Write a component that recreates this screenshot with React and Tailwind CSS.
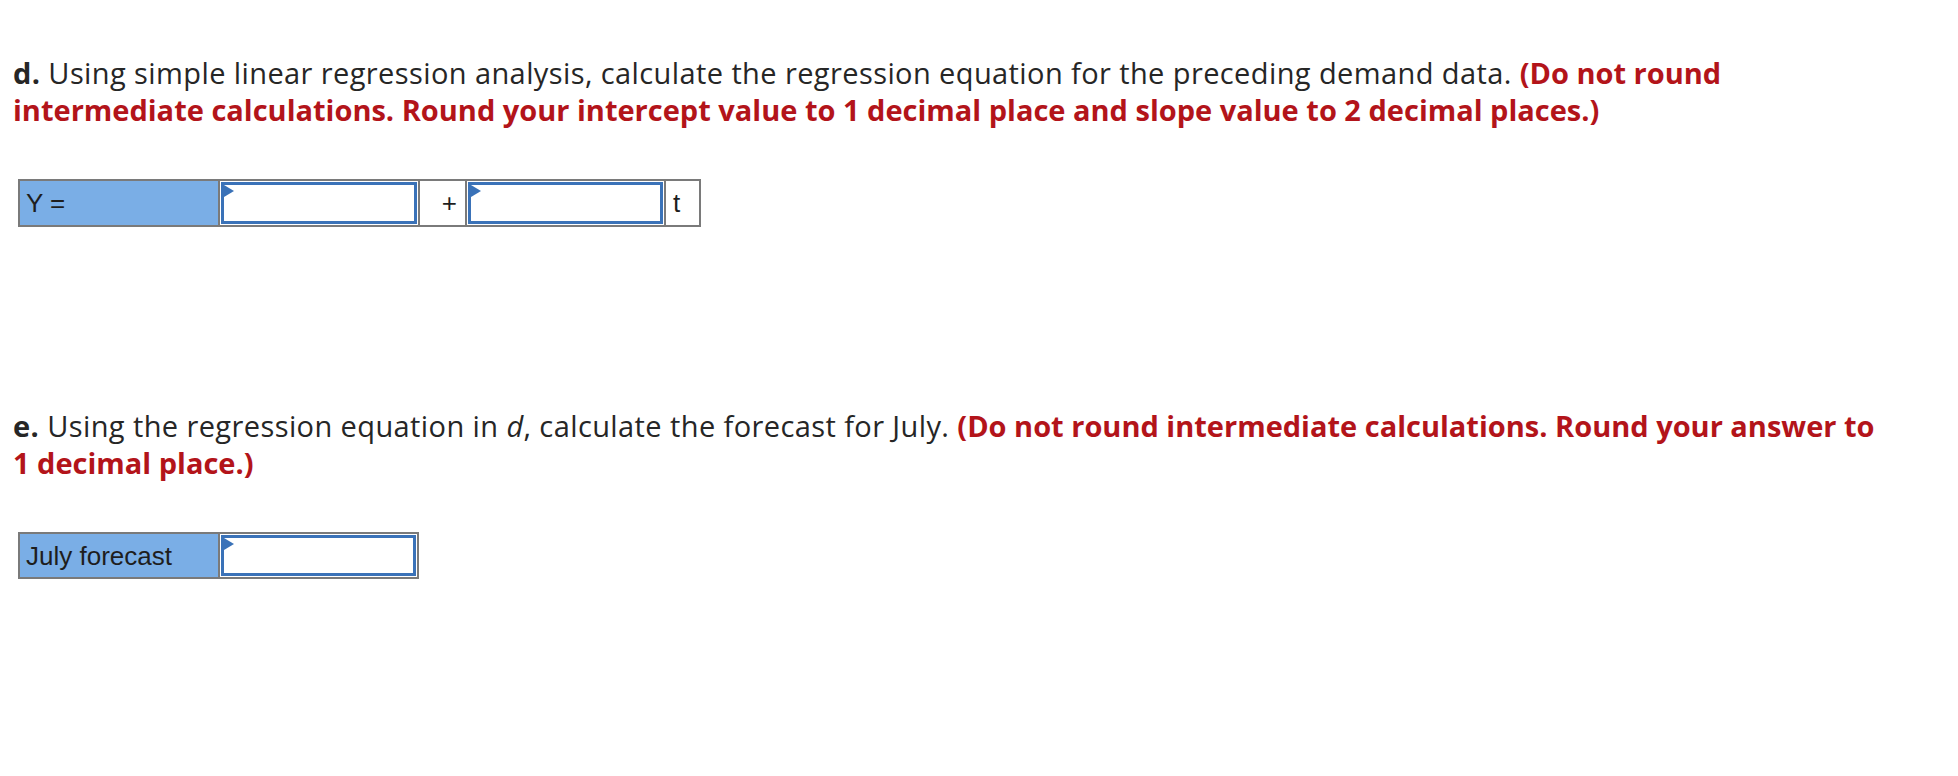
import React from 'react';

const Flag = () => (
  <svg className="absolute left-0 top-0" width="10" height="14" viewBox="0 0 10 14">
    <path d="M0 0 L10 6 L0 12 Z" fill="#3a72b8" />
  </svg>
);

const InputCell = ({ width }) => (
  <div className={`${width} h-full border-l-2 border-[#7a7a7a] bg-white p-px`}>
    <div className="relative h-full w-full border-[3px] border-[#3a72b8] bg-white">
      <Flag />
    </div>
  </div>
);

const Label = ({ children }) => (
  <div className="w-[198px] h-full bg-[#7aaee6] flex items-center pl-[6px] text-[26px] text-[#1e1e1e] leading-none">
    {children}
  </div>
);

export default function App() {
  const red = 'font-bold text-[#b3141a] tracking-[0px]';
  return (
    <div className="w-[1958px] h-[776px] bg-white font-['Open_Sans',sans-serif] text-[#262626]">
      <div className="pt-[54px] pl-[13px]">
        <p className="text-[29px] leading-[37px] tracking-[0.4px] whitespace-nowrap">
          <span className="font-bold">d.</span> Using simple linear regression analysis, calculate the regression
          equation for the preceding demand data. <span className={red}>(Do not round</span>
          <br />
          <span className={red}>intermediate calculations. Round your intercept value to 1 decimal place and slope value to 2 decimal places.)</span>
        </p>
      </div>

      <div className="mt-[51px] ml-[18px] w-[683px] h-[48px] border-2 border-[#7a7a7a] flex font-['Liberation_Sans',sans-serif]">
        <Label>Y =</Label>
        <InputCell width="w-[200px]" />
        <div className="w-[47px] h-full border-l-2 border-[#7a7a7a] bg-white flex items-center justify-end pr-[8px] text-[26px] leading-none text-[#1e1e1e]">+</div>
        <InputCell width="w-[199px]" />
        <div className="flex-1 h-full border-l-2 border-[#7a7a7a] bg-white flex items-center pl-[7px] text-[26px] leading-none text-[#1e1e1e]">t</div>
      </div>

      <div className="mt-[180px] pl-[13px]">
        <p className="text-[29px] leading-[37px] tracking-[0.4px] whitespace-nowrap">
          <span className="font-bold">e.</span> Using the regression equation in <i>d</i>, calculate the forecast for July.{' '}
          <span className={red}>(Do not round intermediate calculations. Round your answer to</span>
          <br />
          <span className={red}>1 decimal place.)</span>
        </p>
      </div>

      <div className="mt-[51px] ml-[18px] w-[401px] h-[47px] border-2 border-[#7a7a7a] flex font-['Liberation_Sans',sans-serif]">
        <Label>July forecast</Label>
        <InputCell width="flex-1" />
      </div>
    </div>
  );
}
